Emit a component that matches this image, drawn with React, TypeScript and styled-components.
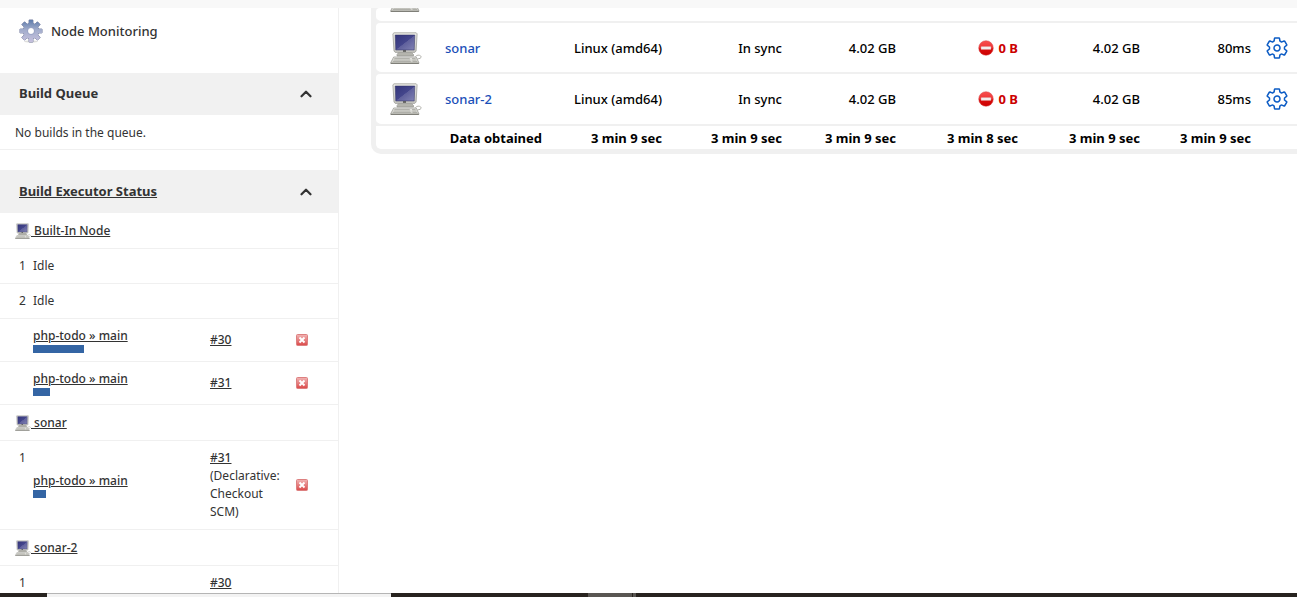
import React from "react";
import styled, { createGlobalStyle, css } from "styled-components";
import { IoSettingsOutline } from "react-icons/io5";
import { FiChevronUp } from "react-icons/fi";

const GlobalStyle = createGlobalStyle`
  * { box-sizing: border-box; }
  body {
    margin: 0;
    background: #fff;
    color: #333;
    font-family: "Noto Sans", "Open Sans", sans-serif;
    font-size: 12px;
    line-height: 18px;
  }
`;

const Page = styled.div`
  display: flex;
  flex-direction: column;
  height: 100vh;
  overflow: hidden;
`;

const TopStrip = styled.div`
  flex: none;
  height: 8px;
  background: #f8f8f8;
`;

const Body = styled.div`
  display: flex;
  flex: 1;
  min-height: 0;
`;

const Sidebar = styled.aside`
  flex: none;
  width: 339px;
  border-right: 1px solid #f0f0f0;
  overflow: hidden;
`;

const TaskLink = styled.a`
  display: flex;
  align-items: center;
  gap: 8px;
  height: 46px;
  margin-bottom: 19px;
  padding-left: 19px;
  color: #333;
  font-size: 13px;
  font-weight: 500;
  text-decoration: none;
`;

const PaneHeader = styled.header<{ $h: number }>`
  display: flex;
  align-items: center;
  justify-content: space-between;
  height: ${(p) => p.$h}px;
  padding: 0 23px 0 19px;
  background: #f1f1f1;
`;

const PaneTitle = styled.h2`
  margin: 0 0 2px;
  color: #333;
  font-size: 13px;
  line-height: 18px;
  font-weight: 700;

  a { color: inherit; }
`;

const CollapseButton = styled.button`
  display: flex;
  padding: 0;
  border: 0;
  background: none;
  color: #333;
`;

const QueueMessage = styled.p`
  margin: 0 0 20px;
  padding: 9px 15px 7px;
  border-bottom: 1px solid #f0f0f0;
`;

const ExecutorTable = styled.table`
  width: 100%;
  table-layout: fixed;
  border-collapse: separate;
  border-spacing: 0;

  th, td {
    padding: 8px 0;
    border-bottom: 1px solid #f0f0f0;
    text-align: left;
    font-weight: 400;
  }
`;

const SideCol = styled.col<{ $w?: number }>`
  ${(p) => p.$w && css`width: ${p.$w}px;`}
`;

const NodeCell = styled.th`
  && { height: 36px; padding: 8px 15px; }
`;

const NodeLink = styled.a`
  display: flex;
  align-items: center;
  width: max-content;
  color: #333;
  font-weight: 500;
  white-space: pre;
`;

const NumberCell = styled.td`
  && { padding-left: 19px; vertical-align: top; }
`;

const BuildCell = styled.td`
  && { padding-right: 12px; }
`;

const JobLink = styled.a`
  display: block;
  width: max-content;
  color: #333;
  font-weight: 500;
`;

const Progress = styled.div`
  width: 100px;
  height: 8px;
`;

const ProgressFill = styled.div`
  height: 100%;
  background: #3465a4;
`;

const StopButton = styled.button`
  display: flex;
  padding: 0;
  border: 0;
  background: none;
`;

const Content = styled.main`
  flex: 1;
  min-width: 0;
  padding-left: 32px;
`;

const TableFrame = styled.div`
  padding: 0 0 5px 5px;
  border-bottom-left-radius: 10px;
  background: #f0f0f0;
`;

const NodeTable = styled.table`
  width: 100%;
  table-layout: fixed;
  border-collapse: separate;
  border-spacing: 0;
  color: #000;
  font-size: 13px;
`;

const NodeCol = styled.col<{ $w?: number }>`
  ${(p) => p.$w && css`width: ${p.$w}px;`}
`;

const NodeRow = styled.tr<{ $h: number; $last?: boolean }>`
  height: ${(p) => p.$h}px;

  > * {
    padding: 0 8px;
    border-bottom: ${(p) => (p.$last ? 0 : 2)}px solid #f0f0f0;
    background: #fff;
    text-align: right;
    white-space: nowrap;
    font-weight: ${(p) => (p.$last ? 700 : 500)};
  }
  > :first-child {
    padding: 0 0 0 14px;
    border-radius: ${(p) => (p.$last ? "0 0 0 5px" : "4px 0 0 6px")};
  }
  > :last-child { padding: 0; }
`;

const NameCell = styled.td`
  && { text-align: left; }
  a { color: #1a4fb8; text-decoration: none; }
`;

const ClippedIcon = styled.div`
  display: flex;
  align-items: flex-end;
  height: 13px;
  padding-bottom: 9px;
  overflow: hidden;
`;

const Warning = styled.span`
  display: flex;
  align-items: center;
  justify-content: flex-end;
  gap: 5px;
  color: #c00;
  font-weight: 700;
`;

const Configure = styled.a`
  display: flex;
  padding-left: 6px;
  color: #0b5bc4;
`;

const Taskbar = styled.footer`
  display: flex;
  flex: none;
  height: 4px;
  background: #28231f;
`;

const TaskbarItem = styled.div<{ $w: number; $tone: "dark" | "light" | "grey" }>`
  width: ${(p) => p.$w}px;
  ${(p) => p.$tone === "light" && css`background: #f3f3f3; border-top: 1px solid #b5b5b5;`}
  ${(p) => p.$tone === "grey" && css`background: #595652;`}
`;

const Computer = ({ size }: { size: number }) => (
  <svg width={size} height={size} viewBox="0 0 32 32" style={{ display: "block" }} aria-hidden="true">
    <defs>
      <linearGradient id="screen" x1="0" y1="0" x2="1" y2="1">
        <stop offset="0" stopColor="#34357a" />
        <stop offset="0.5" stopColor="#44468c" />
        <stop offset="0.52" stopColor="#5f609c" />
        <stop offset="1" stopColor="#8283b4" />
      </linearGradient>
      <linearGradient id="shell" x1="0" y1="0" x2="0" y2="1">
        <stop offset="0" stopColor="#ecece8" />
        <stop offset="1" stopColor="#c4c4be" />
      </linearGradient>
    </defs>
    <path d="M25.500 24.500c2-2 5-1.500 5.500 0 .4 1.800-1.600 2.300-3.500 2.300" fill="none" stroke="#b0b0aa" strokeWidth="1" />
    <path d="M9 20h12l2.500 2.500v1.500H7v-1.500z" fill="#b4b4ad" stroke="#8f8f89" strokeWidth=".6" />
    <path d="M4 .8h22.200l.9 1-1 17.200-1.300 1.400H5.200L4 19 2.900 1.800z" fill="url(#shell)" stroke="#a0a09a" strokeWidth=".8" />
    <path d="M5.200 3h19.600l-.6 15H5.800z" fill="url(#screen)" stroke="#2d2e60" strokeWidth=".5" />
    <path d="M13 19h3" stroke="#333" strokeWidth="1.200" />
    <path d="M3.700 25h22.500l2.600 5.500v1H.8v-1z" fill="url(#shell)" stroke="#91918b" strokeWidth=".7" />
    <path d="M4.300 26.500h15.500M3.700 28h16.500M3 29.500h17.800M22 26.500h3.600M22.300 28h4M22.600 29.500h4.400" stroke="#a6a69f" strokeWidth=".8" />
    <path d="M.8 31.300h28" stroke="#6e6e68" strokeWidth=".9" />
  </svg>
);

const teeth = [0, 45, 90, 135, 180, 225, 270, 315];

const toothPath = (deg: number) => {
  const a = (deg * Math.PI) / 180;
  const pt = (r: number, d: number) => `${12 + r * Math.cos(a + d)} ${12 + r * Math.sin(a + d)}`;
  return `M${pt(7, -0.3)}L${pt(11.2, -0.17)}L${pt(11.2, 0.17)}L${pt(7, 0.3)}Z`;
};

const MonitoringGear = () => (
  <svg width="24" height="24" viewBox="0 0 24 24" aria-hidden="true">
    <defs>
      <linearGradient id="gear" gradientUnits="userSpaceOnUse" x1="12" y1="0" x2="12" y2="24">
        <stop offset="0" stopColor="#5676a8" />
        <stop offset="0.45" stopColor="#a2adcc" />
        <stop offset="1" stopColor="#c9c2df" />
      </linearGradient>
      <mask id="hub">
        <rect width="24" height="24" fill="#fff" />
        <circle cx="12" cy="12" r="3.200" fill="#000" />
      </mask>
    </defs>
    <ellipse cx="12" cy="22.500" rx="7" ry="1.200" fill="#dededc" />
    <g mask="url(#hub)">
      {[
        { paint: "#7c84a5", grow: 0.5 },
        { paint: "url(#gear)", grow: 0 },
      ].map(({ paint, grow }) => (
        <g key={paint} fill={paint} stroke={paint} strokeWidth={grow * 2}>
          <circle cx="12" cy="12" r="7.800" />
          <path d={teeth.map(toothPath).join("")} />
        </g>
      ))}
    </g>
    <circle cx="12" cy="12" r="3.500" fill="none" stroke="#8f9abf" strokeWidth=".8" />
  </svg>
);

const StopIcon = () => (
  <svg width="12" height="12" viewBox="0 0 12 12" aria-hidden="true">
    <defs>
      <linearGradient id="stop" x1="0" y1="0" x2="0" y2="1">
        <stop offset="0" stopColor="#f2b5b5" />
        <stop offset="0.5" stopColor="#e58080" />
        <stop offset="1" stopColor="#db4848" />
      </linearGradient>
    </defs>
    <rect x=".5" y=".5" width="11" height="11" rx="1" fill="url(#stop)" stroke="#dd8080" />
    <path d="M3.500 3.500l5 5M8.500 3.500l-5 5" stroke="#fff" strokeWidth="1.900" />
  </svg>
);

const NoEntryIcon = () => (
  <svg width="16" height="16" viewBox="0 0 16 16" aria-hidden="true">
    <defs>
      <linearGradient id="noentry" x1="0" y1="0" x2="0" y2="1">
        <stop offset="0" stopColor="#f85050" />
        <stop offset="0.5" stopColor="#ee3434" />
        <stop offset="0.55" stopColor="#d80c0c" />
        <stop offset="1" stopColor="#cc0000" />
      </linearGradient>
    </defs>
    <circle cx="8" cy="8" r="7.300" fill="url(#noentry)" stroke="#d94a4a" strokeWidth=".5" />
    <rect x="3" y="6.500" width="10" height="3" rx=".5" fill="#f3eeee" stroke="#dc8a8a" strokeWidth=".4" />
  </svg>
);

const Pane = ({ title, height, link }: { title: string; height: number; link?: boolean }) => (
  <PaneHeader $h={height}>
    <PaneTitle>{link ? <a href="#executors">{title}</a> : title}</PaneTitle>
    <CollapseButton type="button" aria-label={`Collapse ${title}`}>
      <FiChevronUp size={18} strokeWidth={3} />
    </CollapseButton>
  </PaneHeader>
);

const NodeHeading = ({ name }: { name: string }) => (
  <tr>
    <NodeCell colSpan={4} scope="colgroup">
      <NodeLink href="#node">
        <Computer size={16} />
        {` ${name}`}
      </NodeLink>
    </NodeCell>
  </tr>
);

const IdleRow = ({ n }: { n: number }) => (
  <tr>
    <NumberCell>{n}</NumberCell>
    <td colSpan={3}>Idle</td>
  </tr>
);

const JobRow = ({ n, build, stage, done }: { n?: number; build: string; stage?: string; done: number }) => (
  <tr>
    <NumberCell>{n}</NumberCell>
    <td>
      <JobLink href="#job">php-todo » main</JobLink>
      <Progress>
        <ProgressFill style={{ width: `${done}%` }} />
      </Progress>
    </td>
    <BuildCell>
      <JobLink href="#build">{build}</JobLink>
      {stage}
    </BuildCell>
    <td>
      <StopButton type="button" aria-label={`Stop ${build}`}>
        <StopIcon />
      </StopButton>
    </td>
  </tr>
);

const nodes = [
  { name: "sonar", response: "80ms", h: 51 },
  { name: "sonar-2", response: "85ms", h: 52 },
];

const obtained = ["3 min 9 sec", "3 min 9 sec", "3 min 9 sec", "3 min 8 sec", "3 min 9 sec", "3 min 9 sec"];

export default function App() {
  return (
    <>
      <GlobalStyle />
      <Page>
        <TopStrip />
        <Body>
          <Sidebar>
            <TaskLink href="#monitoring">
              <MonitoringGear />
              Node Monitoring
            </TaskLink>
            <Pane title="Build Queue" height={42} />
            <QueueMessage>No builds in the queue.</QueueMessage>
            <Pane title="Build Executor Status" height={43} link />
            <ExecutorTable>
              <colgroup>
                <SideCol $w={33} />
                <SideCol $w={177} />
                <SideCol $w={86} />
                <SideCol />
              </colgroup>
              <tbody>
                <NodeHeading name="Built-In Node" />
                <IdleRow n={1} />
                <IdleRow n={2} />
                <JobRow build="#30" done={51} />
                <JobRow build="#31" done={17} />
                <NodeHeading name="sonar" />
                <JobRow n={1} build="#31" stage="(Declarative: Checkout SCM)" done={13} />
                <NodeHeading name="sonar-2" />
                <tr>
                  <NumberCell>1</NumberCell>
                  <td />
                  <BuildCell>
                    <JobLink href="#build">#30</JobLink>
                  </BuildCell>
                  <td />
                </tr>
              </tbody>
            </ExecutorTable>
          </Sidebar>
          <Content>
            <TableFrame>
              <NodeTable>
                <colgroup>
                  <NodeCol $w={61} />
                  <NodeCol />
                  <NodeCol $w={120} />
                  <NodeCol $w={120} />
                  <NodeCol $w={114} />
                  <NodeCol $w={122} />
                  <NodeCol $w={122} />
                  <NodeCol $w={111} />
                  <NodeCol $w={38} />
                </colgroup>
                <tbody>
                  <NodeRow $h={15}>
                    <td>
                      <ClippedIcon>
                        <Computer size={32} />
                      </ClippedIcon>
                    </td>
                    <td colSpan={8} />
                  </NodeRow>
                  {nodes.map((node) => (
                    <NodeRow key={node.name} $h={node.h}>
                      <td>
                        <Computer size={32} />
                      </td>
                      <NameCell>
                        <a href="#node">{node.name}</a>
                      </NameCell>
                      <td>Linux (amd64)</td>
                      <td>In sync</td>
                      <td>4.02 GB</td>
                      <td>
                        <Warning>
                          <NoEntryIcon />0 B
                        </Warning>
                      </td>
                      <td>4.02 GB</td>
                      <td>{node.response}</td>
                      <td>
                        <Configure href="#configure" aria-label={`Configure ${node.name}`}>
                          <IoSettingsOutline size={24} />
                        </Configure>
                      </td>
                    </NodeRow>
                  ))}
                </tbody>
                <tfoot>
                  <NodeRow $h={23} $last>
                    <td />
                    <th scope="row">Data obtained</th>
                    {obtained.map((time, i) => (
                      <td key={i}>{time}</td>
                    ))}
                    <td />
                  </NodeRow>
                </tfoot>
              </NodeTable>
            </TableFrame>
          </Content>
        </Body>
        <Taskbar>
          <TaskbarItem $w={47} $tone="dark" />
          <TaskbarItem $w={344} $tone="light" />
          <TaskbarItem $w={197} $tone="dark" />
          <TaskbarItem $w={44} $tone="grey" />
          <TaskbarItem $w={1} $tone="dark" />
          <TaskbarItem $w={3} $tone="grey" />
        </Taskbar>
      </Page>
    </>
  );
}
